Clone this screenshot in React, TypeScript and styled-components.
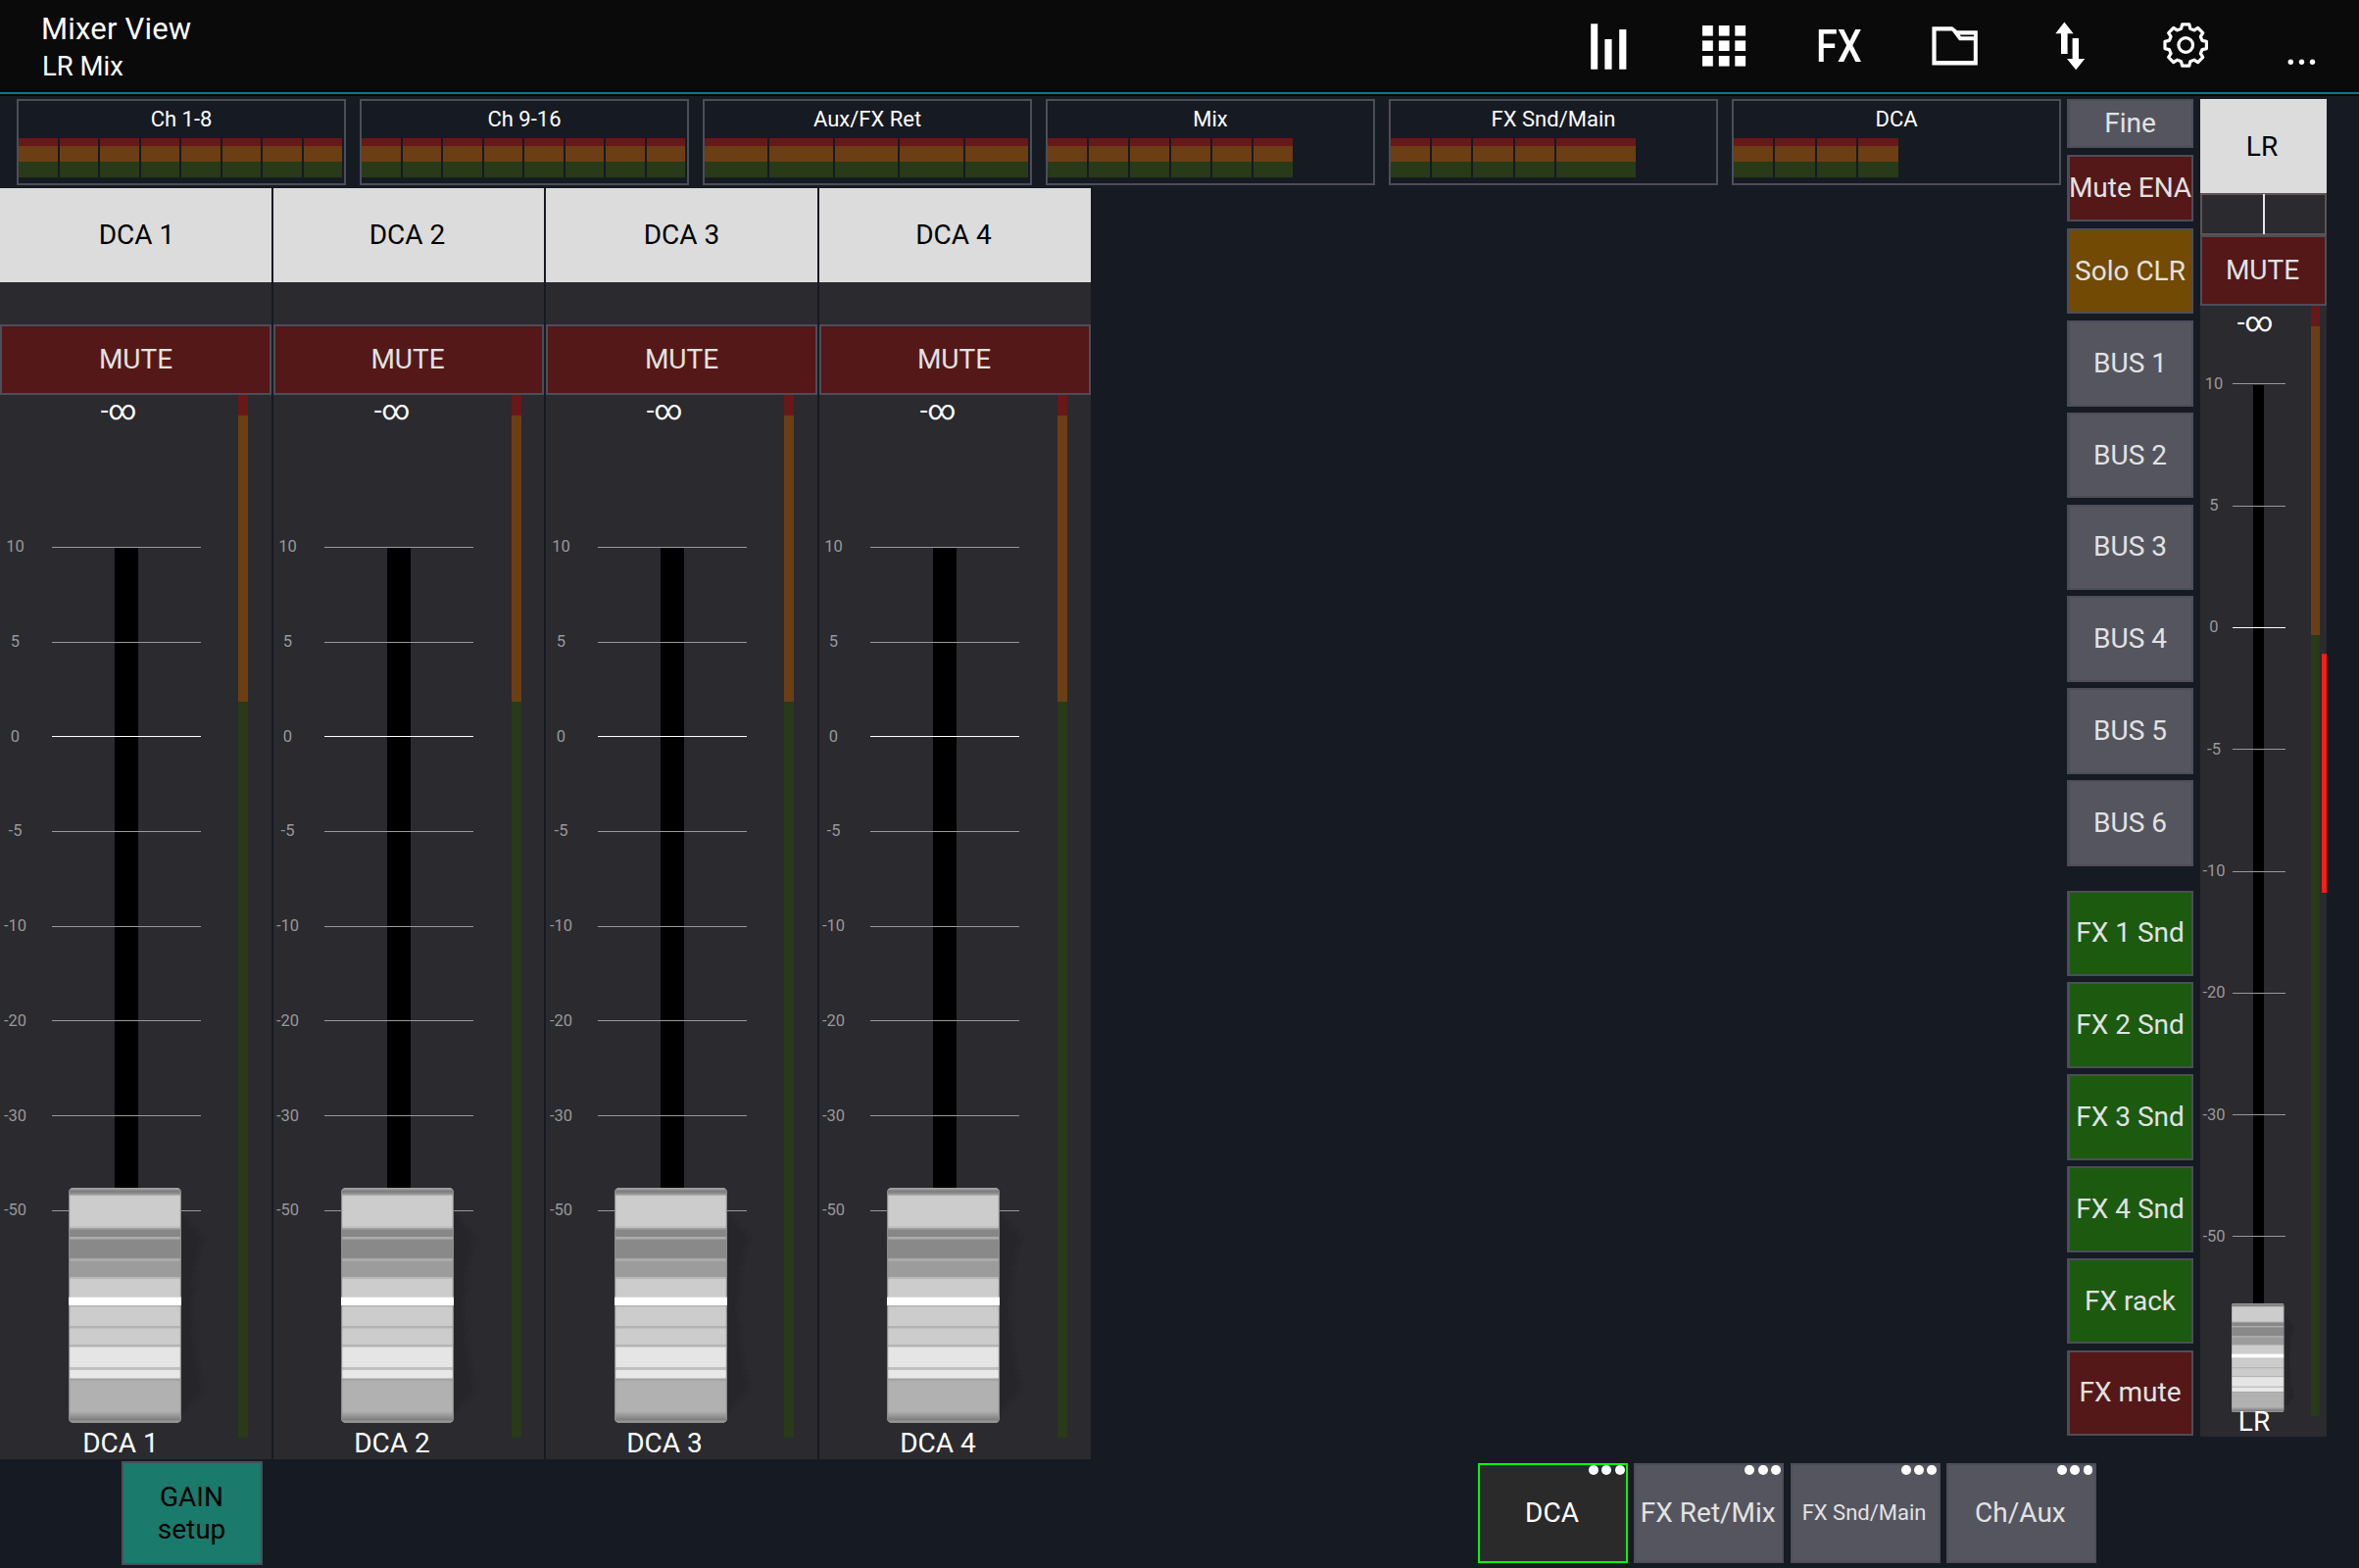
import React from "react";
import styled, { createGlobalStyle } from "styled-components";

const color = {
  page: "#161a22",
  bar: "#0a0a0a",
  teal: "#047c90",
  edge: "#4d4d5a",
  strip: "#2a2a2f",
  name: "#dcdcdc",
  red: "#541818",
  meterRed: "#681818",
  meterOrange: "#6c3e14",
  meterGreen: "#283a18",
  text: "#e2e2e2",
};

const GlobalStyle = createGlobalStyle`
  *, *::before, *::after { box-sizing: border-box; }
  html, body { margin: 0; padding: 0; background: ${color.page}; }
  body {
    font-family: Roboto, "Liberation Sans", sans-serif;
    font-size: 28px;
    line-height: 33px;
    overflow: hidden;
  }
`;

const Screen = styled.div`
  width: 2407px;
  height: 1600px;
  display: flex;
  flex-direction: column;
  background: ${color.page};
  overflow: hidden;
`;

const TopBar = styled.header`
  height: 98px;
  flex: none;
  display: flex;
  justify-content: space-between;
  background: linear-gradient(${color.bar} 94px, ${color.teal} 94px, ${color.teal} 96px, ${color.bar} 96px);
`;

const Titles = styled.div`
  padding: 12px 0 0 42px;
  color: #fff;
`;

const Title = styled.div`
  font-size: 31px;
  line-height: 36px;
  letter-spacing: 0.2px;
`;

const Subtitle = styled.div`
  font-size: 27.5px;
  line-height: 32px;
  margin: 4px 0 0 1px;
`;

const Tools = styled.nav`
  display: flex;
  height: 94px;
`;

const Tool = styled.div`
  width: 118px;
  height: 94px;
  display: flex;
`;

const FxText = styled.span`
  width: 118px;
  padding-left: 1px;
  text-align: center;
  color: #fff;
  font-size: 47px;
  font-weight: 500;
  line-height: 94px;
  transform: scaleX(0.84);
`;

const Main = styled.main`
  display: flex;
  height: 1390px;
  flex: none;
  padding-top: 3px;
`;

const Left = styled.section`
  width: 2109px;
  display: flex;
  flex-direction: column;
`;

const Banks = styled.div`
  display: flex;
  gap: 14px;
  padding-left: 17px;
  height: 91px;
`;

const Bank = styled.div`
  width: 336px;
  height: 88px;
  border: 2px solid ${color.edge};
  color: #fff;
  font-size: 22px;
  line-height: 26px;
  text-align: center;
  padding-top: 6px;
`;

const Cells = styled.div`
  display: flex;
  margin-top: 6px;
`;

const Cell = styled.div<{ $w: number }>`
  width: ${(p) => p.$w}px;
  height: 40px;
  border-right: 2px solid ${color.page};
  background: linear-gradient(
    ${color.meterRed} 8px,
    ${color.meterOrange} 8px,
    ${color.meterOrange} 24px,
    ${color.meterGreen} 24px
  );
`;

const Strips = styled.div`
  width: 1113px;
  height: 1296px;
  display: grid;
  grid-template-columns: 277px 276px 277px 277px;
  column-gap: 2px;
`;

const Strip = styled.div`
  display: flex;
  flex-direction: column;
  background: ${color.strip};
`;

const Name = styled.div<{ $left?: number; $right?: number; $lift?: number }>`
  height: 96px;
  flex: none;
  display: flex;
  align-items: center;
  justify-content: center;
  padding: 0 ${(p) => p.$right ?? 0}px ${(p) => p.$lift ?? 0}px ${(p) => p.$left ?? 0}px;
  background: ${color.name};
  color: #000;
`;

const Spacer = styled.div`
  height: 43px;
  flex: none;
`;

const Pan = styled.div`
  height: 43px;
  flex: none;
  display: flex;
  justify-content: center;
  border: 2px solid #5f5353;
`;

const PanMark = styled.div`
  width: 2px;
  height: 41px;
  margin: -1px 0 0 1px;
  background: #e4e4e4;
`;

const Mute = styled.div<{ $right?: number }>`
  height: 72px;
  flex: none;
  display: flex;
  align-items: center;
  justify-content: center;
  padding: 0 ${(p) => p.$right ?? 0}px 1px 0;
  border: 2px solid ${color.edge};
  background: ${color.red};
  color: ${color.text};
`;

const Body = styled.div`
  flex: 1;
  display: flex;
`;

const FaderColumn = styled.div<{ $w: number; $nudge?: number }>`
  width: ${(p) => p.$w + (p.$nudge ?? 0)}px;
  margin-left: -${(p) => p.$nudge ?? 0}px;
  display: flex;
  flex-direction: column;
`;

const Stack = styled.div<{ $h: number }>`
  display: grid;
  height: ${(p) => p.$h}px;
  flex: none;
  grid-template: 100% / 100%;
  > * {
    grid-area: 1 / 1;
  }
`;

const Value = styled.div<{ $shift: number; $rise?: number }>`
  width: 40px;
  margin: -${(p) => p.$rise ?? 0}px 0 0 ${(p) => p.$shift}px;
  text-align: center;
  white-space: nowrap;
  color: #fff;
`;

const Slot = styled.div<{ $x: number; $top: number; $w: number }>`
  margin: ${(p) => p.$top}px 0 10px ${(p) => p.$x}px;
  width: ${(p) => p.$w}px;
  background: #000;
`;

const Scale = styled.div<{ $top: number }>`
  margin-top: ${(p) => p.$top}px;
`;

const Tick = styled.div<{ $h: number }>`
  height: ${(p) => p.$h}px;
  display: flex;
  align-items: center;
`;

const TickLabel = styled.span<{ $w: number }>`
  width: ${(p) => p.$w}px;
  text-align: center;
  font-size: 16.5px;
  line-height: 20px;
  color: #999;
`;

const TickLine = styled.div<{ $gap: number; $w: number; $bright: boolean }>`
  margin-left: ${(p) => p.$gap}px;
  width: ${(p) => p.$w}px;
  height: 1px;
  background: ${(p) => (p.$bright ? "#fff" : "#999")};
`;

const KnobBox = styled.svg<{ $x: number }>`
  align-self: end;
  margin-left: ${(p) => p.$x}px;
  overflow: visible;
  display: block;
`;

const FootName = styled.div<{ $w: number; $gap: number }>`
  width: ${(p) => p.$w}px;
  margin-top: ${(p) => p.$gap}px;
  text-align: center;
  white-space: nowrap;
  color: #fff;
`;

const Meter = styled.div<{ $w: number; $h: number; $orange: number }>`
  width: ${(p) => p.$w}px;
  height: ${(p) => p.$h}px;
  background: linear-gradient(
    ${color.meterRed} 21px,
    ${color.meterOrange} 21px,
    ${color.meterOrange} ${(p) => p.$orange}px,
    ${color.meterGreen} ${(p) => p.$orange}px
  );
`;

const ScrollMark = styled.div`
  width: 5px;
  height: 244px;
  margin: 355px 0 0 2px;
  background: #ff1c14;
`;

const Side = styled.aside`
  width: 129px;
  display: flex;
  flex-direction: column;
`;

const SideButton = styled.div<{ $bg: string; $h?: number; $gap?: number }>`
  height: ${(p) => p.$h ?? 87.7}px;
  margin-bottom: ${(p) => p.$gap ?? 6.1}px;
  flex: none;
  display: flex;
  align-items: center;
  justify-content: center;
  padding: 0 1px 1px 0;
  border: 2px solid ${color.edge};
  border-left-width: 3px;
  background: ${(p) => p.$bg};
  color: ${color.text};
  white-space: nowrap;
`;

const MasterStrip = styled(Strip)`
  width: 129px;
  height: 1365px;
  margin-left: 7px;
`;

const Bottom = styled.footer`
  height: 112px;
  display: flex;
  align-items: flex-start;
`;

const Gain = styled.div`
  width: 144px;
  height: 106px;
  margin: 3px 0 0 124px;
  padding: 18px 1px 0 0;
  border: 2px solid ${color.edge};
  background: #1a7a6c;
  color: #000;
  text-align: center;
`;

const Tabs = styled.div`
  display: flex;
  gap: 6.3px;
  margin: 5px 0 0 1240px;
`;

const Tab = styled.div<{ $on: boolean; $small: boolean }>`
  width: 153px;
  height: 102px;
  display: flex;
  flex-direction: column;
  align-items: center;
  border: 2px solid ${(p) => (p.$on ? "#00ff00" : color.edge)};
  background: ${(p) => (p.$on ? "#2a2a2a" : "#555560")};
  color: ${(p) => (p.$on ? "#fff" : color.text)};
  font-size: ${(p) => (p.$small ? 22 : 28)}px;
  white-space: nowrap;
`;

const TabText = styled.span`
  padding-right: 2px;
`;

const Dots = styled.div`
  align-self: flex-end;
  display: flex;
  gap: 3.5px;
  padding-right: 1.5px;
  margin-bottom: 22px;
`;

const Dot = styled.i`
  width: 9.8px;
  height: 9.8px;
  border-radius: 50%;
  background: #fff;
`;

const gearPath = (() => {
  const pts: string[] = [];
  for (let i = 0; i < 8; i++) {
    const a = (i * Math.PI) / 4;
    const at = (r: number, side: number) =>
      `${(59.2 + r * Math.cos(a) - side * Math.sin(a)).toFixed(2)} ${(46 + r * Math.sin(a) + side * Math.cos(a)).toFixed(2)}`;
    pts.push(at(16.8, -4.6), at(21.2, -3.6), at(21.2, 3.6), at(16.8, 4.6));
  }
  return `M${pts.join("L")}Z`;
})();

const Icon = ({ children }: { children: React.ReactNode }) => (
  <svg width="118" height="94" viewBox="0 0 118 94" fill="#fff">
    {children}
  </svg>
);

const BarsIcon = () => (
  <Icon>
    <path d="M42.2 24.2h7v46.6h-7zM56.4 40h7.2v30.8h-7.2zM71.2 30h7.2v40.8h-7.2z" />
  </Icon>
);

const GridIcon = () => (
  <Icon>
    {[38, 54.8, 71.3].map((x) =>
      [26, 41.4, 57].map((y) => <rect key={`${x}-${y}`} x={x} y={y} width="10.8" height="10.6" />),
    )}
  </Icon>
);

const FolderIcon = () => (
  <Icon>
    <path
      transform="translate(1.8 0)"
      fillRule="evenodd"
      d="M34.6 27.3H55.3L60.3 31.2H81V66.4H34.6ZM38.8 31.6V62H77V41.2H62.3L55 31.6ZM63 35.6L64 37.2H77.2V35.6Z"
    />
  </Icon>
);

const ArrowsIcon = () => (
  <Icon>
    <path d="M53.4 22.5L62.6 34.2H56.6V55H50V34.2H44.3ZM65.2 71.2L56 60H61.6V39H68V60H74.2Z" />
  </Icon>
);

const GearIcon = () => (
  <Icon>
    <g fill="none" stroke="#fff" strokeWidth="3.2" strokeLinejoin="round">
      <path d={gearPath} />
      <circle cx="59.2" cy="46" r="7.3" />
    </g>
  </Icon>
);

const MoreIcon = () => (
  <Icon>
    {[48.3, 59.5, 70.5].map((x) => (
      <circle key={x} cx={x} cy="63.3" r="2.7" />
    ))}
  </Icon>
);

const knobBands: [number, number, string][] = [
  [8, 39, "#cccccc"],
  [39, 41, "#c2c2c2"],
  [41, 42.5, "#a0a0a0"],
  [42.5, 50, "#878787"],
  [50, 52.5, "#acacac"],
  [52.5, 72, "#898989"],
  [72, 75, "#ababab"],
  [75, 91, "#9c9c9c"],
  [91, 93, "#b8b8b8"],
  [93, 112, "#cccccc"],
  [120, 121.5, "#b4b4b4"],
  [121.5, 141, "#cccccc"],
  [141, 143.5, "#b2b2b2"],
  [143.5, 160, "#cccccc"],
  [160, 162.5, "#b4b4b4"],
  [162.5, 183, "#e5e5e5"],
  [183, 186, "#c0c0c0"],
  [186, 194.5, "#e8e8e8"],
  [194.5, 197.5, "#a4a4a4"],
  [197.5, 228, "#b1b1b1"],
];

const Knob = ({ id, x, width, height }: { id: string; x: number; width: number; height: number }) => (
  <KnobBox $x={x} width={width} height={height} viewBox="0 0 115 240" preserveAspectRatio="none">
    <defs>
      <linearGradient id={`${id}-top`} x1="0" y1="0" x2="0" y2="1">
        <stop offset="0" stopColor="#a0a0a0" />
        <stop offset="0.2" stopColor="#9a9a9a" />
        <stop offset="0.35" stopColor="#7c7c7c" />
        <stop offset="0.6" stopColor="#888888" />
        <stop offset="1" stopColor="#c4c4c4" />
      </linearGradient>
      <linearGradient id={`${id}-low`} x1="0" y1="0" x2="0" y2="1">
        <stop offset="0" stopColor="#b1b1b1" />
        <stop offset="0.75" stopColor="#7e7e7e" />
        <stop offset="0.85" stopColor="#999999" />
        <stop offset="1" stopColor="#8a8a8a" />
      </linearGradient>
      <clipPath id={`${id}-clip`}>
        <rect width="115" height="240" rx="5" />
      </clipPath>
      <filter id={`${id}-soft`} x="-50%" y="-10%" width="200%" height="120%">
        <feGaussianBlur stdDeviation="1.5" />
      </filter>
    </defs>
    <path
      d="M113 24L138 50C124 85 122 150 138 206L113 232Z"
      fill="#262529"
      filter={`url(#${id}-soft)`}
    />
    <g clipPath={`url(#${id}-clip)`}>
      <rect width="115" height="240" fill="#c4c4c4" />
      <rect width="115" height="9" fill={`url(#${id}-top)`} />
      {knobBands.map(([from, to, fill]) => (
        <rect key={from} y={from} width="115" height={to - from + 0.3} fill={fill} />
      ))}
      <rect y="228" width="115" height="12" fill={`url(#${id}-low)`} />
      <path d="M.6 4V236M114.4 4V236" stroke="#8c8c8c" strokeWidth="1.2" />
      <rect y="111.7" width="115" height="8.2" fill="#fff" />
    </g>
  </KnobBox>
);

const levels = ["10", "5", "0", "-5", "-10", "-20", "-30", "-50"];

const Channel = ({ index }: { index: number }) => {
  const name = `DCA ${index}`;
  const first = index === 1;
  const nudge = index % 2 === 0 ? 1 : 0;
  return (
    <Strip>
      <Name $left={first ? 2 : 0} $right={nudge * 3} $lift={2}>
        {name}
      </Name>
      <Spacer />
      <Mute $right={nudge * 2}>MUTE</Mute>
      <Body>
        <FaderColumn $w={243} $nudge={nudge}>
          <Stack $h={1049}>
            <Value $shift={101 + nudge} $rise={1}>-∞</Value>
            <Slot $x={117} $top={156} $w={24} />
            <Scale $top={107}>
              {levels.map((level) => (
                <Tick key={level} $h={96.71}>
                  <TickLabel $w={31}>{level}</TickLabel>
                  <TickLine $gap={22} $w={152} $bright={level === "0"} />
                </Tick>
              ))}
            </Scale>
            <Knob id={`dca${index}`} x={70} width={115} height={240} />
          </Stack>
          <FootName $w={first ? 246 : 244 - (1 - nudge) * 2} $gap={4}>
            {name}
          </FootName>
        </FaderColumn>
        <Meter $w={10} $h={1064} $orange={313} />
      </Body>
    </Strip>
  );
};

const banks: { name: string; cells: number[] }[] = [
  { name: "Ch 1-8", cells: Array(8).fill(41.5) },
  { name: "Ch 9-16", cells: Array(8).fill(41.5) },
  { name: "Aux/FX Ret", cells: Array(5).fill(66.4) },
  { name: "Mix", cells: Array(6).fill(42) },
  { name: "FX Snd/Main", cells: [42.2, 42.2, 42.2, 42.2, 83.2] },
  { name: "DCA", cells: Array(4).fill(42.4) },
];

const tabs = ["DCA", "FX Ret/Mix", "FX Snd/Main", "Ch/Aux"];

export default function App() {
  return (
    <Screen>
      <GlobalStyle />
      <TopBar>
        <Titles>
          <Title>Mixer View</Title>
          <Subtitle>LR Mix</Subtitle>
        </Titles>
        <Tools>
          <Tool><BarsIcon /></Tool>
          <Tool><GridIcon /></Tool>
          <Tool><FxText>FX</FxText></Tool>
          <Tool><FolderIcon /></Tool>
          <Tool><ArrowsIcon /></Tool>
          <Tool><GearIcon /></Tool>
          <Tool><MoreIcon /></Tool>
        </Tools>
      </TopBar>
      <Main>
        <Left>
          <Banks>
            {banks.map((bank) => (
              <Bank key={bank.name}>
                {bank.name}
                <Cells>
                  {bank.cells.map((w, i) => (
                    <Cell key={i} $w={w} />
                  ))}
                </Cells>
              </Bank>
            ))}
          </Banks>
          <Strips>
            {[1, 2, 3, 4].map((n) => (
              <Channel key={n} index={n} />
            ))}
          </Strips>
        </Left>
        <Side>
          <SideButton $bg="#555560" $h={50} $gap={7}>Fine</SideButton>
          <SideButton $bg={color.red} $h={68} $gap={7}>Mute ENA</SideButton>
          <SideButton $bg="#724a04" $h={87} $gap={7}>Solo CLR</SideButton>
          {[1, 2, 3, 4, 5, 6].map((n) => (
            <SideButton key={n} $bg="#555560" $gap={n === 6 ? 25 : undefined}>
              {`BUS ${n}`}
            </SideButton>
          ))}
          {[1, 2, 3, 4].map((n) => (
            <SideButton key={n} $bg="#1c5a10">
              {`FX ${n} Snd`}
            </SideButton>
          ))}
          <SideButton $bg="#1c5a10">FX rack</SideButton>
          <SideButton $bg={color.red}>FX mute</SideButton>
        </Side>
        <MasterStrip>
          <Name $right={3}>LR</Name>
          <Pan>
            <PanMark />
          </Pan>
          <Mute $right={2}>MUTE</Mute>
          <Body>
            <FaderColumn $w={113}>
              <Stack $h={1129}>
                <Value $shift={36}>-∞</Value>
                <Slot $x={54} $top={81} $w={11} />
                <Scale $top={17.7}>
                  {levels.map((level) => (
                    <Tick key={level} $h={124.3}>
                      <TickLabel $w={28}>{level}</TickLabel>
                      <TickLine $gap={5} $w={54} $bright={level === "0"} />
                    </Tick>
                  ))}
                </Scale>
                <Knob id="lr" x={32} width={53.5} height={111} />
              </Stack>
              <FootName $w={110} $gap={-7}>LR</FootName>
            </FaderColumn>
            <Meter $w={9} $h={1133} $orange={336} />
            <ScrollMark />
          </Body>
        </MasterStrip>
      </Main>
      <Bottom>
        <Gain>
          GAIN
          <br />
          setup
        </Gain>
        <Tabs>
          {tabs.map((tab, i) => (
            <Tab key={tab} $on={i === 0} $small={tab === "FX Snd/Main"}>
              <Dots>
                <Dot />
                <Dot />
                <Dot />
              </Dots>
              <TabText>{tab}</TabText>
            </Tab>
          ))}
        </Tabs>
      </Bottom>
    </Screen>
  );
}
